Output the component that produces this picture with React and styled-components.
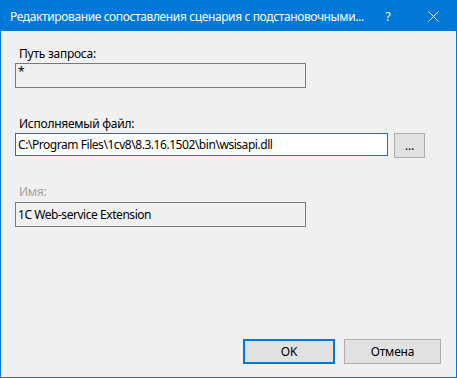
import React from "react";
import styled, { createGlobalStyle } from "styled-components";

const Global = createGlobalStyle`
  html, body { margin: 0; padding: 0; background: #f0f0f0; }
  body { font-family: "Noto Sans", "Open Sans", sans-serif; }
`;

const Window = styled.div`
  box-sizing: border-box;
  width: 457px;
  height: 378px;
  border: 1px solid #0078d7;
  background: #f0f0f0;
  display: flex;
  flex-direction: column;
  font-family: "Noto Sans", "Open Sans", sans-serif;
  font-size: 12px;
  color: #000;
`;

const TitleBar = styled.div`
  height: 30px;
  flex: none;
  background: #0078d7;
  color: #fff;
  display: flex;
  align-items: center;
  padding-left: 9px;
`;

const Title = styled.div`
  flex: 1;
  font-size: 12px;
  letter-spacing: -0.38px;
  white-space: nowrap;
  overflow: hidden;
`;

const TitleButton = styled.div`
  width: ${(p) => p.$w}px;
  height: 30px;
  display: flex;
  align-items: center;
  justify-content: center;
  font-size: 12px;
  color: #fff;
`;

const Content = styled.div`
  flex: 1;
  display: flex;
  flex-direction: column;
  padding: 15px 14px 13px 14px;
`;

const Label = styled.div`
  height: 15px;
  line-height: 15px;
  padding-left: 4px;
  letter-spacing: -0.25px;
  margin-top: ${(p) => p.$top || 0}px;
  margin-bottom: ${(p) => p.$gap || 2}px;
  color: ${(p) => (p.$disabled ? "#a0a0a0" : "#000")};
`;

const Field = styled.div`
  box-sizing: border-box;
  width: ${(p) => p.$w}px;
  height: ${(p) => p.$h}px;
  border: 1px solid ${(p) => (p.$focus ? "#0078d7" : "#7a7a7a")};
  background: ${(p) => (p.$focus ? "#fff" : "#f0f0f0")};
  padding: 0 2px;
  display: flex;
  align-items: ${(p) => (p.$top ? "flex-start" : "center")};
  white-space: nowrap;
  overflow: hidden;
  letter-spacing: -0.45px;
  line-height: 15px;
`;

const Row = styled.div`
  display: flex;
  align-items: flex-start;
  gap: 6px;
`;

const Button = styled.button`
  box-sizing: border-box;
  width: ${(p) => p.$w}px;
  height: 25px;
  margin: 0;
  padding: 0;
  background: #e1e1e1;
  border: ${(p) => (p.$default ? "2px solid #0078d7" : "1px solid #adadad")};
  font-family: inherit;
  font-size: 12px;
  letter-spacing: -0.2px;
  color: #000;
  display: flex;
  align-items: center;
  justify-content: center;
`;

const Footer = styled.div`
  margin-top: auto;
  display: flex;
  justify-content: flex-end;
  gap: 9px;
  padding-right: 1px;
`;

export default function App() {
  return (
    <>
      <Global />
      <Window>
        <TitleBar>
          <Title>Редактирование сопоставления сценария с подстановочными...</Title>
          <TitleButton $w={44}>?</TitleButton>
          <TitleButton $w={46}>
            <svg width="11" height="11" viewBox="0 0 11 11">
              <path d="M0.5 0.5 L10.5 10.5 M10.5 0.5 L0.5 10.5" stroke="#fff" strokeWidth="1" />
            </svg>
          </TitleButton>
        </TitleBar>
        <Content>
          <Label>Путь запроса:</Label>
          <Field $w={291} $h={25} $top>*</Field>
          <Label $top={28}>Исполняемый файл:</Label>
          <Row>
            <Field $w={373} $h={23} $focus>
              C:\Program Files\1cv8\8.3.16.1502\bin\wsisapi.dll
            </Field>
            <Button $w={31}>...</Button>
          </Row>
          <Label $top={26} $gap={3} $disabled>Имя:</Label>
          <Field $w={291} $h={25}>1C Web-service Extension</Field>
          <Footer>
            <Button $w={92} $default>OK</Button>
            <Button $w={97}>Отмена</Button>
          </Footer>
        </Content>
      </Window>
    </>
  );
}
